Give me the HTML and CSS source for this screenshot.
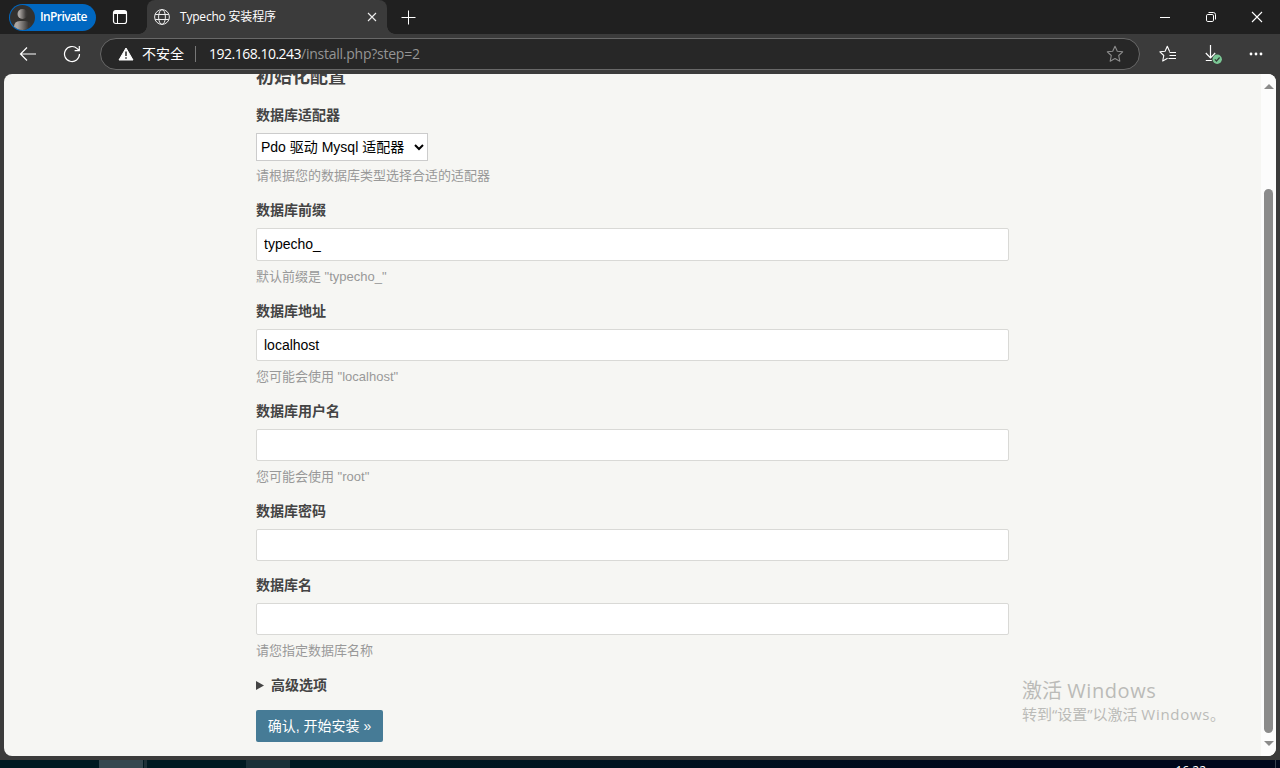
FILE: index.html
```html
<!doctype html>
<html lang="zh-CN">
<head>
<meta charset="UTF-8" />
<title>Typecho 安装程序</title>
<link rel="stylesheet" href="styles.css">
</head>
<body>
	<div id="tab-bar">
		<div class="profile">
			<svg class="avatar" width="25" height="25" viewBox="0 0 25 25">
				<defs>
					<linearGradient id="shade"><stop offset="0.2" stop-color="#aaa5a2"/><stop offset="0.85" stop-color="#383635"/></linearGradient>
					<clipPath id="round"><circle cx="12.5" cy="12.5" r="12.5"/></clipPath>
				</defs>
				<g clip-path="url(#round)">
					<rect width="25" height="25" fill="#33312f"/>
					<circle cx="12.5" cy="9" r="5" fill="url(#shade)"/>
					<path d="M4 25v-3q0-6 6-6h5q6 0 6 6v3z" fill="url(#shade)"/>
				</g>
			</svg>
			<span>InPrivate</span>
		</div>
		<svg class="tab-menu" width="16" height="16" viewBox="0 0 16 16" fill="none" stroke="#fff">
			<rect x="1.5" y="1.5" width="13" height="13" rx="2.2" stroke-width="1.2"/>
			<path d="M2 3.5h12" stroke-width="3"/>
			<path d="M5.5 4v10"/>
		</svg>
		<div class="tab">
			<svg width="16" height="16" viewBox="0 0 16 16" fill="none" stroke="#eee">
				<circle cx="8" cy="8" r="7.4"/>
				<ellipse cx="8" cy="8" rx="3.4" ry="7.4"/>
				<path d="M1.2 5.5h13.6M1.2 10.5h13.6"/>
			</svg>
			<span class="tab-title">Typecho 安装程序</span>
			<svg class="tab-close" width="10" height="10" viewBox="0 0 10 10" stroke="#eee" stroke-width="1.1"><path d="M1 1l8 8M9 1l-8 8"/></svg>
		</div>
		<svg class="new-tab" width="15" height="15" viewBox="0 0 15 15" stroke="#fff"><path d="M7.5 .5v14M.5 7.5h14"/></svg>
		<div class="window-buttons">
			<svg width="12" height="12" viewBox="0 0 12 12" stroke="#fff"><path d="M1 6.5h10"/></svg>
			<svg width="12" height="12" viewBox="0 0 12 12" fill="none" stroke="#fff"><rect x="1.5" y="3.5" width="7" height="7" rx="1.3"/><path d="M3.5 1.5h4.8q2.2 0 2.2 2.2v4.8"/></svg>
			<svg width="12" height="12" viewBox="0 0 12 12" stroke="#fff" stroke-width="1.1"><path d="M1 1l10 10M11 1l-10 10"/></svg>
		</div>
	</div>
	<div id="toolbar">
		<svg class="back" width="18" height="16" viewBox="0 0 18 16" fill="none" stroke="#fff" stroke-width="1.2"><path d="M17 8H1.5M8 1.5L1.5 8 8 14.5"/></svg>
		<svg class="reload" width="18" height="18" viewBox="0 0 18 18" fill="none" stroke="#fff" stroke-width="1.2"><path d="M16.5 9a7.5 7.5 0 1 1-2.3-5.4l2 1.9M16.3 1v4.7h-4.7"/></svg>
		<div class="address">
			<svg width="16" height="14" viewBox="0 0 16 14"><path d="M8 1L15 13H1z" fill="#fff" stroke="#fff" stroke-linejoin="round"/><path d="M8 4.5v4.5M8 10.2v1.5" stroke="#272727" stroke-width="1.5"/></svg>
			<span class="unsafe">不安全</span>
			<span class="divider"></span>
			<span class="url"><b>192.168.10.243</b>/install.php?step=2</span>
			<svg class="star" width="18" height="18" viewBox="0 0 18 18" fill="none" stroke="#8c8c8c" stroke-width="1.1" stroke-linejoin="round"><path d="M9 1.2l2.3 5 5.4.6-4 3.7 1.1 5.7L9 13.5l-4.8 2.7 1.1-5.7-4-3.7 5.4-.6z"/></svg>
		</div>
		<div class="tools">
			<svg width="18" height="18" viewBox="0 0 18 18" fill="none" stroke="#fff" stroke-width="1.1" stroke-linejoin="round"><path d="M11 6.3l-.5-.1L8.3 1.3 6.1 6.2l-5.2.6 3.9 3.7-1.1 5.5 4.9-2.7M10.5 7.5H17M10.5 10.5H17M9.5 13.5H17"/></svg>
			<svg width="18" height="20" viewBox="0 0 18 20" fill="none" stroke="#fff" stroke-width="1.2"><path d="M6.5 1v12.5M1.8 9l4.7 4.8L11.2 9M1.8 16.5h6"/><circle cx="13.2" cy="15.2" r="4.7" fill="#7bc795" stroke="none"/><path d="M10.8 15.3l1.7 1.7 3.1-3.5" stroke="#334039"/></svg>
			<svg width="14" height="4" viewBox="0 0 14 4" fill="#fff"><circle cx="2" cy="2" r="1.4"/><circle cx="7" cy="2" r="1.4"/><circle cx="12" cy="2" r="1.4"/></svg>
		</div>
	</div>
	<div id="page">
		<form id="form">
			<h2>初始化配置</h2>
			<div class="field">
				<label for="dbAdapter">数据库适配器</label>
				<select id="dbAdapter">
					<option>Pdo 驱动 Mysql 适配器</option>
				</select>
				<p class="description">请根据您的数据库类型选择合适的适配器</p>
			</div>
			<div class="field">
				<label for="dbPrefix">数据库前缀</label>
				<input type="text" id="dbPrefix" value="typecho_" />
				<p class="description">默认前缀是 "typecho_"</p>
			</div>
			<div class="field">
				<label for="dbHost">数据库地址</label>
				<input type="text" id="dbHost" value="localhost" />
				<p class="description">您可能会使用 "localhost"</p>
			</div>
			<div class="field">
				<label for="dbUser">数据库用户名</label>
				<input type="text" id="dbUser" />
				<p class="description">您可能会使用 "root"</p>
			</div>
			<div class="field">
				<label for="dbPassword">数据库密码</label>
				<input type="password" id="dbPassword" />
			</div>
			<div class="field">
				<label for="dbDatabase">数据库名</label>
				<input type="text" id="dbDatabase" />
				<p class="description">请您指定数据库名称</p>
			</div>
			<div class="advanced"><svg width="8" height="9" viewBox="0 0 8 9"><path d="M0 0l8 4.5L0 9z" fill="#444"/></svg>高级选项</div>
			<button type="button" class="btn">确认, 开始安装 »</button>
		</form>
		<div class="scrollbar">
			<span class="arrow-up"></span>
			<span class="thumb"></span>
			<span class="arrow-down"></span>
		</div>
		<div id="watermark">
			<div class="big">激活 <span>Windows</span></div>
			<div class="small">转到“设置”以激活 <span>Windows</span>。</div>
		</div>
	</div>
	<div id="taskbar">
		<span class="task active"></span>
		<span class="task-edge"></span>
		<span class="task"></span>
		<span class="clock">16:22</span>
		<span class="show-desktop"></span>
	</div>
</body>
</html>
```
FILE: styles.css
```css
html, body, h2, form, p{
	margin:0;
	padding:0;
}
*{
	box-sizing:border-box;
}
body{
	display:flex;
	flex-direction:column;
	height:768px;
	overflow:hidden;
	background:#3b3b3b;
	color:#fff;
	font:12px "Open Sans", "Noto Sans CJK SC", sans-serif;
}
svg{
	display:block;
	flex:none;
}

/* browser window */
#tab-bar{
	display:flex;
	align-items:center;
	height:34px;
	flex:none;
	background:#202020;
}
.profile{
	display:flex;
	align-items:center;
	width:87px;
	height:27px;
	margin-left:9px;
	padding-left:1px;
	border-radius:14px;
	background:#0067c0;
	font-weight:600;
	white-space:nowrap;
}
.profile span{
	margin-left:5px;
	padding-bottom:1px;
	font-size:12px;
	letter-spacing:-0.6px;
}
.tab-menu{
	margin-left:16px;
}
.tab{
	display:flex;
	align-items:center;
	align-self:stretch;
	width:240px;
	margin-left:19px;
	padding:0 10px 0 7px;
	background:#3b3b3b;
	border-radius:8px 8px 0 0;
	position:relative;
}
.tab:before, .tab:after{
	content:"";
	position:absolute;
	bottom:0;
	left:-8px;
	width:8px;
	height:8px;
	background:radial-gradient(circle at 0 0, #202020 7.5px, #3b3b3b 8px);
}
.tab:after{
	left:auto;
	right:-8px;
	background:radial-gradient(circle at 100% 0, #202020 7.5px, #3b3b3b 8px);
}
.tab-title{
	margin-left:10px;
	padding-bottom:2px;
	letter-spacing:-0.2px;
}
.tab-close{
	margin-left:auto;
}
.new-tab{
	margin-left:14px;
}
.window-buttons{
	display:flex;
	gap:34px;
	margin:0 17px 0 auto;
}
#toolbar{
	display:flex;
	align-items:center;
	height:40px;
	flex:none;
}
.back{
	margin-left:19px;
}
.reload{
	margin-left:26px;
}
.address{
	display:flex;
	align-items:center;
	width:1040px;
	height:32px;
	margin-left:19px;
	padding:0 15px 0 17px;
	border:1px solid #686868;
	border-radius:16px;
	background:#272727;
	font-size:14px;
}
.unsafe{
	margin-left:8px;
	padding-bottom:2px;
}
.divider{
	width:1px;
	height:16px;
	margin:0 13px 0 11px;
	background:#777;
}
.url{
	padding-bottom:1px;
	color:#959595;
	letter-spacing:-0.25px;
}
.url b{
	color:#fff;
	font-weight:normal;
	letter-spacing:-0.5px;
}
.star{
	margin-left:auto;
}
.tools{
	display:flex;
	align-items:center;
	margin-left:19px;
	gap:27px;
}

/* install page */
#page{
	position:relative;
	display:flex;
	height:682px;
	flex:none;
	margin:0 4px;
	border-radius:8px;
	overflow:hidden;
	background:#f6f6f3;
	color:#444;
}
#form{
	width:753px;
	margin-left:252px;
	font:14px/20px "Liberation Sans", "Noto Sans CJK SC", sans-serif;
}
h2{
	height:28px;
	margin:-11px 0 14.4px;
	font-size:18px;
	line-height:28px;
}
.field{
	margin-bottom:14px;
}
.field label{
	display:block;
	height:20px;
	margin-bottom:8px;
	font-weight:bold;
}
.field input, .field select{
	display:block;
	font:14px "Liberation Sans", "Noto Sans CJK SC", sans-serif;
	color:#000;
	background-color:#fff;
	outline:0;
}
.field input{
	width:100%;
	height:32.2px;
	padding:0 7px;
	border:1px solid #d9d9d6;
	border-radius:2px;
}
.field select{
	width:172px;
	height:28px;
	border:1px solid #ccc;
	border-radius:0;
}
.description{
	height:21px;
	margin-top:5px;
	font-size:13px;
	line-height:22px;
	color:#999;
}
select + .description{
	margin-top:4px;
}
.advanced{
	display:flex;
	align-items:center;
	gap:7px;
	height:20px;
	font-weight:bold;
}
.btn{
	display:block;
	width:127px;
	height:32px;
	margin-top:14.6px;
	padding:0 0 2px;
	border:0;
	border-radius:2px;
	background:#467b96;
	color:#fff;
	font:14px "Liberation Sans", "Noto Sans CJK SC", sans-serif;
	white-space:nowrap;
}
.scrollbar{
	display:flex;
	flex-direction:column;
	align-items:center;
	width:15px;
	margin-left:auto;
	padding:10px 0 9px;
	background:#fcfcfc;
}
.arrow-up, .arrow-down{
	border:5px solid transparent;
	border-top:0;
	border-bottom:5px solid #8b8b8b;
}
.arrow-down{
	margin-top:8px;
	border-bottom:0;
	border-top:5px solid #8b8b8b;
}
.thumb{
	width:9px;
	height:544px;
	margin-top:100px;
	border-radius:5px;
	background:#8b8b8b;
}
#watermark{
	position:absolute;
	left:1018px;
	top:603px;
	color:#bbbbb8;
	font-family:"Open Sans", "Noto Sans CJK SC", sans-serif;
	white-space:nowrap;
}
#watermark .big{
	font-size:20px;
	line-height:28px;
}
#watermark .big span{
	letter-spacing:0.6px;
}
#watermark .small{
	margin-top:-1px;
	font-size:15px;
	line-height:20px;
}
#watermark .small span{
	letter-spacing:0.7px;
}

/* top of the windows taskbar */
#taskbar{
	display:flex;
	height:8px;
	margin-top:4px;
	flex:none;
	overflow:hidden;
	background:linear-gradient(90deg, #001a22 25%, #00071b 80%);
}
.task{
	width:44px;
	margin-left:99px;
	background:#1a3038;
}
.task.active{
	background:#354850;
}
.task-edge{
	width:3px;
	margin-left:1px;
	background:#1e3138;
}
.clock{
	margin:4px 69px 0 auto;
	font-size:12px;
	line-height:14px;
}
.show-desktop{
	width:1px;
	margin-right:4px;
	background:#3a4350;
}
```
